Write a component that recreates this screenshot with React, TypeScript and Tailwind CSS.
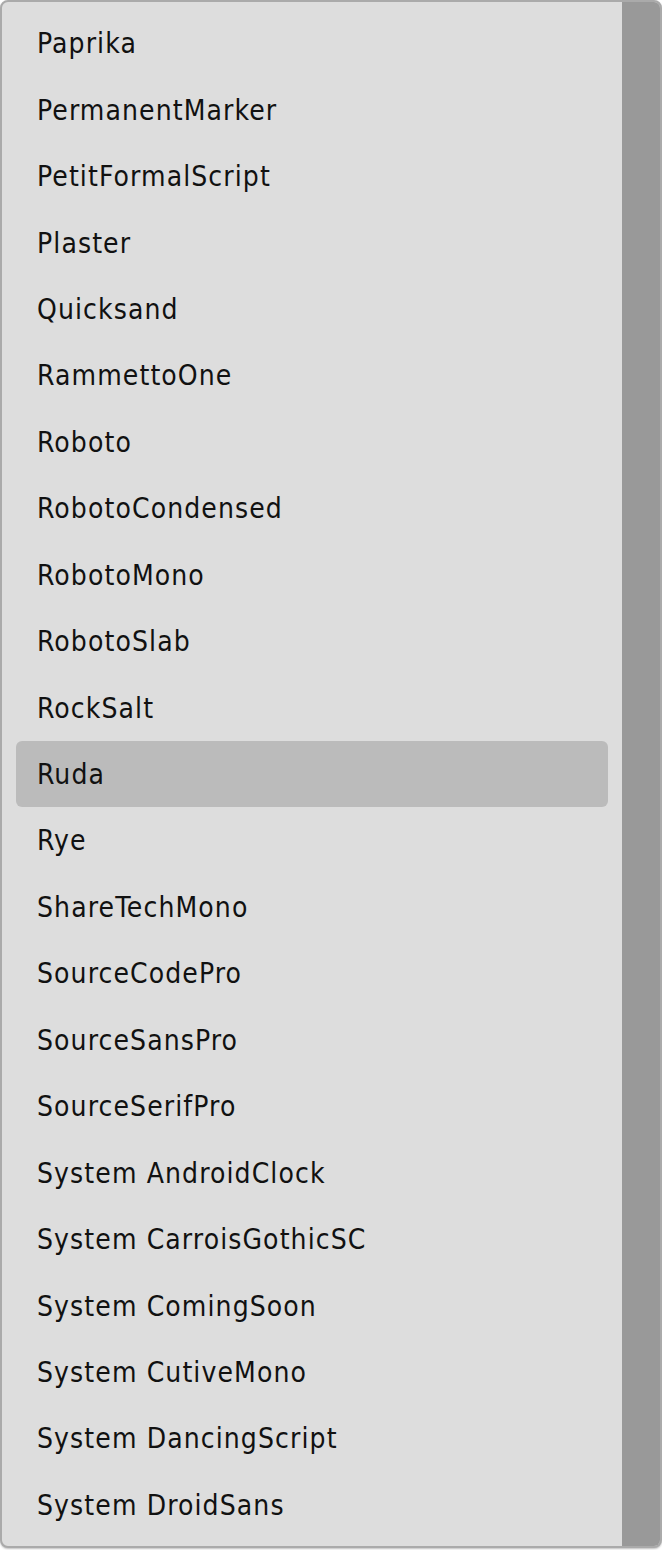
import React from "react";

const items = [
  "Paprika",
  "PermanentMarker",
  "PetitFormalScript",
  "Plaster",
  "Quicksand",
  "RammettoOne",
  "Roboto",
  "RobotoCondensed",
  "RobotoMono",
  "RobotoSlab",
  "RockSalt",
  "Ruda",
  "Rye",
  "ShareTechMono",
  "SourceCodePro",
  "SourceSansPro",
  "SourceSerifPro",
  "System AndroidClock",
  "System CarroisGothicSC",
  "System ComingSoon",
  "System CutiveMono",
  "System DancingScript",
  "System DroidSans",
];

export default function App() {
  return (
    <div className="w-[662px] h-[1550px] bg-white">
      <div className="flex h-[1548px] w-[662px] overflow-hidden rounded-[8px] border-2 border-[#aaaaaa] bg-[#dddddd] shadow-[0_1px_2px_rgba(0,0,0,0.25)]">
        <div className="flex flex-1 flex-col pl-[14px] pr-[14px] pt-[8px]">
          {items.map((t) => (
            <div
              key={t}
              className={`flex h-[66.45px] shrink-0 items-center rounded-[6px] pl-[21px] pt-[2px] text-[28px] tracking-[1.1px] text-[#111111] ${
                t === "Ruda" ? "bg-[#bbbbbb]" : ""
              }`}
              style={{ fontFamily: '"DejaVu Sans Condensed", "Noto Sans", sans-serif' }}
            >
              {t}
            </div>
          ))}
        </div>
        <div className="w-[38px] shrink-0 bg-[#999999]" />
      </div>
    </div>
  );
}
